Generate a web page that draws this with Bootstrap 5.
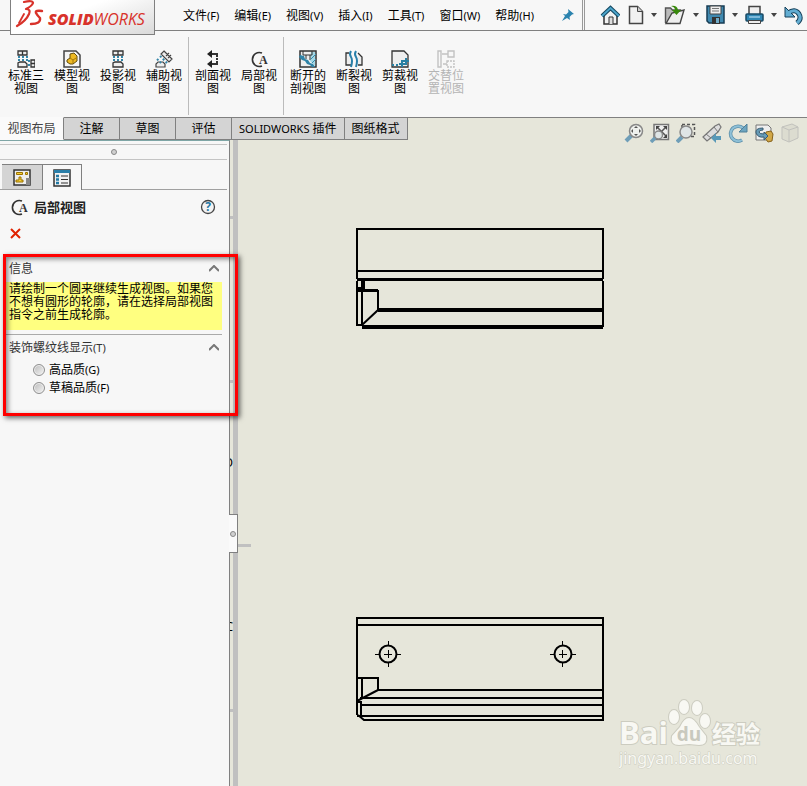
<!DOCTYPE html>
<html lang="zh-CN">
<head>
<meta charset="utf-8">
<meta name="viewport" content="width=device-width, initial-scale=1">
<title>SOLIDWORKS</title>
<link href="https://cdn.jsdelivr.net/npm/bootstrap@5.3.0/dist/css/bootstrap.min.css" rel="stylesheet">
<style>
:root{--sheet:#e6e6da;--chrome:#f7f7f7;--line:#808080}
body{font:12px/16px "Noto Sans","Noto Sans CJK SC",sans-serif;color:#000;background:var(--sheet)}
button{border:0;background:none;padding:0;color:inherit;font:inherit;line-height:inherit}
svg{display:block;flex:none}
.topbar{height:31px;background:var(--chrome);border-bottom:1px solid var(--line)}
.brand{width:145px;height:35px;margin-left:10px;border:1px solid var(--line);border-top:0;background:linear-gradient(160deg,#fff 40%,#dadada);position:relative;z-index:2;flex:none}
.menus{gap:15px;margin-left:28px;padding-top:2px;white-space:nowrap}
.menus small,.group small{font-size:11px}
.pin{margin-left:27px}
.quick{border-left:3px double #999;padding-right:4px;padding-left:15px;flex:none}
.quick .drop{padding:0 7px}
.caret{width:6px;height:4px;background:#444;clip-path:polygon(0 0,100% 0,50% 100%);display:block}
.ribbon{height:86px;background:var(--chrome);padding:6px 3px 2px}
.ribbon .tool{width:46px;padding-top:13px;line-height:13px}
.tool svg{margin:0 auto 1px}
.tool span{display:block;width:36px;margin:0 auto}
.tool:disabled{color:#b4b4b4}
.rule{width:1px;background:#bbb;margin:0 1px}
.tabrow{height:23px}
.tabrow .tab{height:23px;min-width:56px;padding:0 7px;background:#d4d4d4;border:1px solid var(--line);border-left-width:0;white-space:nowrap}
.tabrow .tab.active{background:#fafafa;color:#444;border-color:transparent var(--line) transparent transparent;width:64px}
.tab .latin{font-size:11px}
.tabline{border-top:1px solid var(--line);padding:5px 7px 0 0}
.hud{gap:6px}
.side{width:230px;flex:none;background:var(--chrome);border-right:1px solid var(--line);border-top:1px solid #7fa6a6;position:relative;z-index:2}
.grip{height:16px;margin-top:3px;margin-right:2px;border:1px solid #c4c4c4;border-width:1px 0}
.dot{width:6px;height:6px;border:1px solid #888;background:#d0d0d0;border-radius:50%}
.pages{height:30px;padding:4px 0 0 2px;border-bottom:1px solid #a0a0a0;margin-right:2px}
.pages button{width:40px;height:25px;background:#d4d4d4;border-top:1px solid var(--line);display:flex;align-items:center;justify-content:center}
.pages button.on{height:26px;background:var(--chrome);border:1px solid var(--line);border-bottom:0}
.title{height:33px;padding:0 13px 0 10px;gap:6px;color:#222}
.title strong{font-size:13px}
.close-x{margin-left:10px;margin-top:5px;height:11px}
.groups{position:relative;margin-top:19px;height:158px;padding:0 7px 0 6px}
.group header{height:24px;padding:0 3px 2px;color:#333}
.note{background:#ffff80;height:48px;line-height:13px;padding:0 3px;margin:0}
.group+.group{border-top:1px solid #aaa;margin-top:4px;padding-top:2px}
.opt{height:18px;gap:4px;padding-left:27px}
.opt input{appearance:none;width:12px;height:12px;margin:0;border:1px solid #909090;border-radius:50%;background:linear-gradient(135deg,#bbb,#f5f5f5);box-shadow:inset 0 0 0 1px #eee}
.mark-box{position:absolute;top:-4px;right:-9px;bottom:0;left:3px;border:3px solid #f00;box-shadow:2px 2px 5px #0009,inset 2px 2px 5px #0007;pointer-events:none}
.handle{position:absolute;right:-9px;top:373px;width:9px;height:39px;background:#fafafa;border:1px solid var(--line);border-left:0;padding-left:1px}
.sheet{position:relative;overflow:hidden}
.sheet .plan{position:absolute;inset:0;width:100%;height:100%}
.watermark{position:absolute;right:42px;bottom:14px}
</style>
<script src="https://cdn.jsdelivr.net/npm/bootstrap@5.3.0/dist/js/bootstrap.bundle.min.js" defer></script>
</head>
<body class="d-flex flex-column min-vh-100">
<header class="topbar d-flex align-items-start">
  <div class="brand"><svg width="143" height="34" role="img" aria-label="SOLIDWORKS">
    <g fill="none" stroke="#d8322a" stroke-linecap="round" stroke-linejoin="round"><path d="M13 2Q22 0 22 3 21 6 15 9 20 9 18 14 15 21 6 26" stroke-width="2.200"/><path d="M13 14L8 23" stroke-width="1.800"/><path d="M31 11Q24 10 25 13 26 15 29 18 30 24 20 24" stroke-width="2.400"/></g>
    <text x="37" y="25" font-size="16" font-family="Open Sans,sans-serif" font-style="italic" fill="#d8322a"><tspan font-weight="800">SOLID</tspan><tspan>WORKS</tspan></text></svg></div>
  <nav class="menus d-flex align-self-center">
    <button>文件<small>(F)</small></button><button>编辑<small>(E)</small></button><button>视图<small>(V)</small></button><button>插入<small>(I)</small></button><button>工具<small>(T)</small></button><button>窗口<small>(W)</small></button><button>帮助<small>(H)</small></button>
  </nav>
  <button class="pin align-self-center" aria-label="固定"><svg width="14" height="14"><path d="M7 1l6 5-2 .5-2.500 2.500.500 3-3-2L1 13l3-5-2-2 3 .5L7.500 4z" fill="#2b83ae"/></svg></button>
  <div class="quick d-flex align-items-center align-self-stretch ms-auto">
    <button aria-label="主页"><svg width="20" height="20"><path d="M4 10v9h13v-9l-6.500-6z" fill="#f2f2f2" stroke="#333" stroke-width="1.500"/><path d="M9 19v-7h4v7" fill="#ddd" stroke="#333"/><path d="M2 11l8.500-8 8.500 8" fill="none" stroke="#164a63" stroke-width="4"/><path d="M2 11l8.500-8 8.500 8" fill="none" stroke="#4ca5cb" stroke-width="1.800"/></svg></button>
    <button class="ms-2" aria-label="新建"><svg width="16" height="20"><path d="M1.500 1.500h8l5 5v12h-13z" fill="#f1f1f1" stroke="#444" stroke-width="1.500"/><path d="M9.500 1.500v5h5" fill="#ccc" stroke="#444"/></svg></button>
    <button class="drop" aria-label="新建选项"><i class="caret"></i></button>
    <button aria-label="打开"><svg width="22" height="20"><path d="M1.500 18V3h5l2 2h8v3" fill="#bbb" stroke="#555" stroke-width="1.400"/><path d="M2 18.500L8 8l12-3-4 13.500z" fill="#eee" stroke="#444" stroke-width="1.400"/><path d="M7 1q6-1 7 4h3l-4.500 5L8 5h3q0-3-4-4z" fill="#38890c"/></svg></button>
    <button class="drop" aria-label="打开选项"><i class="caret"></i></button>
    <button aria-label="保存"><svg width="19" height="20"><path d="M1 1h17v17H3l-2-2z" fill="#4089b0" stroke="#173d54" stroke-width="1.500"/><path d="M4 1h11v8H4z" fill="#eee" stroke="#444"/><path d="M6 3.500h7M6 6h7" stroke="#777"/><path d="M6 12h8v7H6z" fill="#333"/><path d="M10 13h3v5h-3z" fill="#70abc8"/></svg></button>
    <button class="drop" aria-label="保存选项"><i class="caret"></i></button>
    <button aria-label="打印"><svg width="19" height="20"><path d="M4 9V1.500h11V9" fill="#eee" stroke="#444" stroke-width="1.500"/><rect x="1" y="9" width="17" height="7" rx="1" fill="#3087b4" stroke="#174964" stroke-width="1.500"/><path d="M4 12h11" stroke="#c8eaff"/><path d="M3.500 15.500h12v3h-12z" fill="#eee" stroke="#444"/></svg></button>
    <button class="drop" aria-label="打印选项"><i class="caret"></i></button>
    <button aria-label="撤消"><svg width="19" height="20"><path d="M4 8q7-5 11 1 3 5-2 9" fill="none" stroke="#17415a" stroke-width="5"/><path d="M1 2v10h10L8 9 4 5z" fill="#62add2" stroke="#17415a"/><path d="M4 8q7-5 11 1 3 5-2 9" fill="none" stroke="#62add2" stroke-width="3"/></svg></button>
  </div>
</header>
<div class="ribbon d-flex">
  <button class="tool align-self-start"><svg width="18" height="18" fill="#eee" stroke="#333" stroke-width="1.300"><path d="M1 1h9v4H1zM5.500 1v4M1 17v-4l2-1h5l2 2v3zM14 10h4v7h-4zM14 13.500h4"/><path d="M1 7h10M1 10h10M12 10v7" stroke="#3485a8" stroke-width="2" stroke-dasharray="2 2" fill="none"/></svg><span>标准三视图</span></button>
  <button class="tool align-self-start"><svg width="18" height="18"><path d="M1 1h12l4 4v12H1z" fill="#f5f5f5" stroke="#444" stroke-width="1.500"/><path d="M4 10l3-2V4l4-1 3 3v5l-4 3H7l-3-2z" fill="#edb923" stroke="#644d0b"/><path d="M7 8l3 2 3-2M10 10v3" fill="none" stroke="#a5780b"/></svg><span>模型视图</span></button>
  <button class="tool align-self-start"><svg width="12" height="18" fill="#eee" stroke="#333" stroke-width="1.300"><path d="M1 1h10v4H1zM6 1v4M1 17v-4l2-1h6l2 2v3z"/><path d="M1 7h10M1 10h10" stroke="#3485a8" stroke-width="2" stroke-dasharray="2 2"/></svg><span>投影视图</span></button>
  <button class="tool align-self-start"><svg width="18" height="18" fill="#eee" stroke="#444" stroke-width="1.200"><path d="M9 1l8 8-3 3-8-8zM11 6l3-3M13 8l3-3M1 17v-3l2-2h5l2 2v3z"/><path d="M5 6l8 8M2 9l4 4" stroke="#3485a8" stroke-width="2" stroke-dasharray="2 2"/></svg><span>辅助视图</span></button>
  <div class="rule"></div>
  <button class="tool align-self-start"><svg width="18" height="18"><path d="M7 4h6v10H7" fill="none" stroke="#333" stroke-width="2"/><path d="M13 7v1M13 10v1" stroke="#f7f7f7" stroke-width="3"/><path d="M3 4l5-4v8zM3 14l5-4v8z" fill="#222"/></svg><span>剖面视图</span></button>
  <button class="tool align-self-start"><svg width="18" height="18"><path d="M12 3A7 7 0 1 0 12 16" fill="none" stroke="#333" stroke-width="1.600"/><text x="9" y="14" font-family="Liberation Serif,serif" font-weight="bold" font-size="12" fill="#333">A</text></svg><span>局部视图</span></button>
  <div class="rule"></div>
  <button class="tool align-self-start"><svg width="18" height="18"><path d="M1 1h16v16H1z" fill="#eee" stroke="#333" stroke-width="1.500"/><path d="M12 2h4v14l-5-5z" fill="#a4d8e6"/><path d="M1 5l4 1 1 3 3 1 2 3 3 1 2 3h-3l-2-2-3-1-2-3-3-1-3-3z" fill="#2f83a7"/><path d="M4 1v4h9V1M7 5v4M11 5v5" stroke="#333" fill="none"/><path d="M12 9l5-5M13 13l4-4" stroke="#368bae"/></svg><span>断开的剖视图</span></button>
  <button class="tool align-self-start"><svg width="18" height="18"><path d="M4 3H1v12h5M13 3l4 4v8h-4" fill="#eee" stroke="#333" stroke-width="1.300"/><path d="M6 1Q4 4 6 7T6 17M11 1Q9 4 11 7T11 17" fill="none" stroke="#287fa9" stroke-width="2"/></svg><span>断裂视图</span></button>
  <button class="tool align-self-start"><svg width="18" height="18"><path d="M1 1h12l4 4v12H1z" fill="#eee" stroke="#333" stroke-width="1.300"/><path d="M1 15h8" stroke="#2980a3" stroke-width="2" stroke-dasharray="2 2"/><path d="M8 14h7V8M11 17v-6h7" fill="none" stroke="#2980a3" stroke-width="2"/></svg><span>剪裁视图</span></button>
  <button class="tool align-self-start" disabled><svg width="18" height="18" fill="none" stroke="#c2c2c2" stroke-width="1.400"><path d="M1 1h3v16H1zM5 4h6M11 1h6v6h-6zM6 14h4"/><path d="M10 11h7v6h-7z" stroke-dasharray="2 1"/></svg><span>交替位置视图</span></button>
</div>
<div class="tabrow d-flex align-items-stretch">
  <button class="tab active">视图布局</button><button class="tab">注解</button><button class="tab">草图</button><button class="tab">评估</button><button class="tab"><span class="latin">SOLIDWORKS</span> 插件</button><button class="tab">图纸格式</button>
  <div class="tabline flex-grow-1 d-flex justify-content-end align-items-start">
    <div class="hud d-flex">
      <button aria-label="整屏显示全图"><svg width="20" height="20"><path d="M2 18l6-6" stroke="#6f9eb8" stroke-width="4"/><circle cx="12" cy="8" r="6.500" fill="#eef0ed" stroke="#888" stroke-width="1.500"/><path d="M12 3l2 2h-4zM12 13l2-2h-4zM7 8l2-2v4zM17 8l-2-2v4z" fill="#555"/></svg></button>
      <button aria-label="局部放大"><svg width="20" height="20"><path d="M4 1.500h14.500v15H4z" fill="#eee" stroke="#777" stroke-width="1.500"/><path d="M7 4l9 9M16 4l-5 5" stroke="#555" stroke-width="1.500"/><path d="M6 3h4L6 7zM17 3h-4l4 4zM17 15v-4l-4 4z" fill="#444"/><path d="M1 19l5-5" stroke="#6f9eb8" stroke-width="3.500"/><circle cx="8.500" cy="12" r="4" fill="#dfe5e6" stroke="#888" stroke-width="1.500"/></svg></button>
      <button aria-label="区域缩放"><svg width="20" height="20"><path d="M6 1.500h12.500v12H11M6 2v3" fill="none" stroke="#555" stroke-width="1.500" stroke-dasharray="3 2"/><path d="M1 19l5-5" stroke="#6f9eb8" stroke-width="4"/><circle cx="10" cy="9" r="6" fill="#dfe5e6" stroke="#888" stroke-width="1.500"/></svg></button>
      <button aria-label="上一视图"><svg width="20" height="20"><path d="M1 14l12-11 4-2 2 3-3 5L5 18z" fill="#ddd" stroke="#777" stroke-width="1.200"/><path d="M4 11l5 4M12 4l4 5" stroke="#777"/><path d="M9 15l5-5v3h5v4h-5v3z" fill="#5999b8"/></svg></button>
      <button aria-label="旋转"><svg width="20" height="20"><path d="M14 17A7.500 7.500 0 1 1 15 5" fill="none" stroke="#5b8ea9" stroke-width="3.500"/><path d="M14 17A7.500 7.500 0 1 1 15 5" fill="none" stroke="#8ec0d7" stroke-width="2"/><path d="M19 1v8h-8z" fill="#6da5c0" stroke="#4f7f98"/></svg></button>
      <button aria-label="三维工程图"><svg width="20" height="20"><path d="M2 2h12l3 3v12H2z" fill="#eee" stroke="#777"/><path d="M12 9l5-1 2 3-1 7-4 1-3-4z" fill="#d1a848" stroke="#87621b"/><path d="M9 5Q1 5 2 10q2 5 8 4v3l4-4-4-4v2q-5 0-5-2 0-2 4-2z" fill="#669bb7" stroke="#385b70"/></svg></button>
      <button aria-label="显示样式" disabled><svg width="20" height="20" opacity=".6"><path d="M2 4l10-3 6 3v11l-9 4-7-3z" fill="#d6d6cb" stroke="#aaa"/><path d="M2 4l7 3v12M9 7l9-3" fill="none" stroke="#aaa"/></svg></button>
    </div>
  </div>
</div>
<main class="d-flex flex-grow-1">
  <aside class="side">
    <div class="grip d-flex align-items-center justify-content-center"><i class="dot"></i></div>
    <div class="pages d-flex">
      <button aria-label="工程图树"><svg width="18" height="17"><path d="M1 1h16v15H1z" fill="#eee" stroke="#333" stroke-width="1.500"/><path d="M3.500 3.500h6v2h-6zM12.500 3.500h2v2h-2zM6 8h2v3h2v2H3v-2h3z" fill="#f6cf35" stroke="#9b7200"/><path d="M13 9h4v7h-4z" fill="#888"/></svg></button>
      <button class="on" aria-label="属性"><svg width="18" height="18"><path d="M1 1h16v16H1z" fill="#f2f2f2" stroke="#333" stroke-width="1.500"/><path d="M1 2.500h16" stroke="#2a7ea8" stroke-width="3"/><path d="M3 7h3M3 10.500h3M3 14h3" stroke="#2079a5" stroke-width="2.500"/><path d="M8 7h7M8 10.500h7M8 14h7" stroke="#333" stroke-width="1.200"/></svg></button>
    </div>
    <div class="title d-flex align-items-center"><svg width="18" height="18"><path d="M12 3A7 7 0 1 0 12 16" fill="none" stroke="#333" stroke-width="1.600"/><text x="9" y="14" font-family="Liberation Serif,serif" font-weight="bold" font-size="12" fill="#333">A</text></svg><strong class="flex-grow-1">局部视图</strong>
      <button aria-label="帮助"><svg width="16" height="16"><circle cx="8" cy="8" r="6.500" fill="#f3f3f3" stroke="#444" stroke-width="1.300"/><text x="8" y="12" text-anchor="middle" font-weight="bold" font-size="12" fill="#2478a5">?</text></svg></button></div>
    <button class="close-x d-block" aria-label="关闭"><svg width="11" height="11"><path d="M1 1l9 9M10 1l-9 9" stroke="#e02200" stroke-width="2"/></svg></button>
    <div class="groups">
      <section class="group"><header class="d-flex align-items-center justify-content-between"><span>信息</span><svg width="10" height="8"><path d="M0 6l5-5 5 5" fill="none" stroke="#777" stroke-width="2"/></svg></header>
        <p class="note">请绘制一个圆来继续生成视图。如果您不想有圆形的轮廓，请在选择局部视图指令之前生成轮廓。</p></section>
      <section class="group"><header class="d-flex align-items-center justify-content-between"><span>装饰螺纹线显示<small>(T)</small></span><svg width="10" height="8"><path d="M0 6l5-5 5 5" fill="none" stroke="#777" stroke-width="2"/></svg></header>
        <label class="opt d-flex align-items-center"><input type="radio" name="quality"><span>高品质<small>(G)</small></span></label>
        <label class="opt d-flex align-items-center"><input type="radio" name="quality"><span>草稿品质<small>(F)</small></span></label></section>
      <div class="mark-box"></div>
    </div>
    <div class="handle d-flex align-items-center"><i class="dot"></i></div>
  </aside>
  <section class="sheet flex-grow-1" aria-label="工程图">
    <svg class="plan">
      <g font-size="12"><text x="3" y="327" text-anchor="end">D</text><text x="3" y="491" text-anchor="end">C</text></g>
      <path d="M5.500 0v2000" stroke="#c0c0c0" stroke-width="5"/>
      <path d="M0 77.500h4M0 241.500h4M8 405.500h13M0 570.500h4" stroke="#c0c0c0" stroke-width="3"/>
      <g transform="translate(126 88)" fill="none" stroke="#000" stroke-width="2">
        <path d="M1 51V1h246v50M1 43h246M1 53v44h5M247 53v46M6 53v44M8 53v8M22 62v20L6 97M1 60h5"/>
        <path d="M1 51.500h246M2 62.500h20" stroke-width="3"/><path d="M22 82h225M6 99h241" stroke-width="4"/>
      </g>
      <g transform="translate(126 477)" fill="none" stroke="#000" stroke-width="2">
        <path d="M1 98V1h246v102H8l-6-5M1 8h246M1 61h21v12h225M6 61v20M22 73L1 84M4 81h243M5 88h242M1 99h246M5 84v15M1 85h5"/>
        <circle cx="32" cy="37" r="8.500"/><circle cx="207" cy="37" r="8.500"/>
        <path d="M19 37.500h5M28 37.500h8M40 37.500h5M32.500 24v5M32.500 33v8M32.500 45v5M194 37.500h5M203 37.500h8M215 37.500h5M206.500 24v5M206.500 33v8M206.500 45v5" stroke-width="1"/>
      </g>
    </svg>
    <svg class="watermark" width="146" height="76" fill="#f8f8f3" stroke="#ccccc0" stroke-width="2" paint-order="stroke">
      <text x="0" y="48" font-family="Open Sans,sans-serif" font-size="31" font-weight="700">Bai</text>
      <ellipse cx="55" cy="21" rx="5" ry="7"/><ellipse cx="65" cy="11" rx="5" ry="7"/><ellipse cx="78" cy="12" rx="5" ry="7"/><ellipse cx="86" cy="25" rx="5" ry="7"/>
      <path d="M70 22Q75 22 80 31L87 40Q89 49 80 49L70 48 60 49Q51 49 53 40L61 31Q65 22 70 22z"/>
      <text x="70" y="45" text-anchor="middle" font-family="Open Sans,sans-serif" font-size="19" font-weight="700" fill="#c9c9be" stroke="none">du</text>
      <text x="93" y="47" font-size="24" font-weight="700">经验</text>
      <text x="0" y="68" font-size="16" stroke-width="1">jingyan.baidu.com</text>
    </svg>
  </section>
</main>
</body>
</html>
